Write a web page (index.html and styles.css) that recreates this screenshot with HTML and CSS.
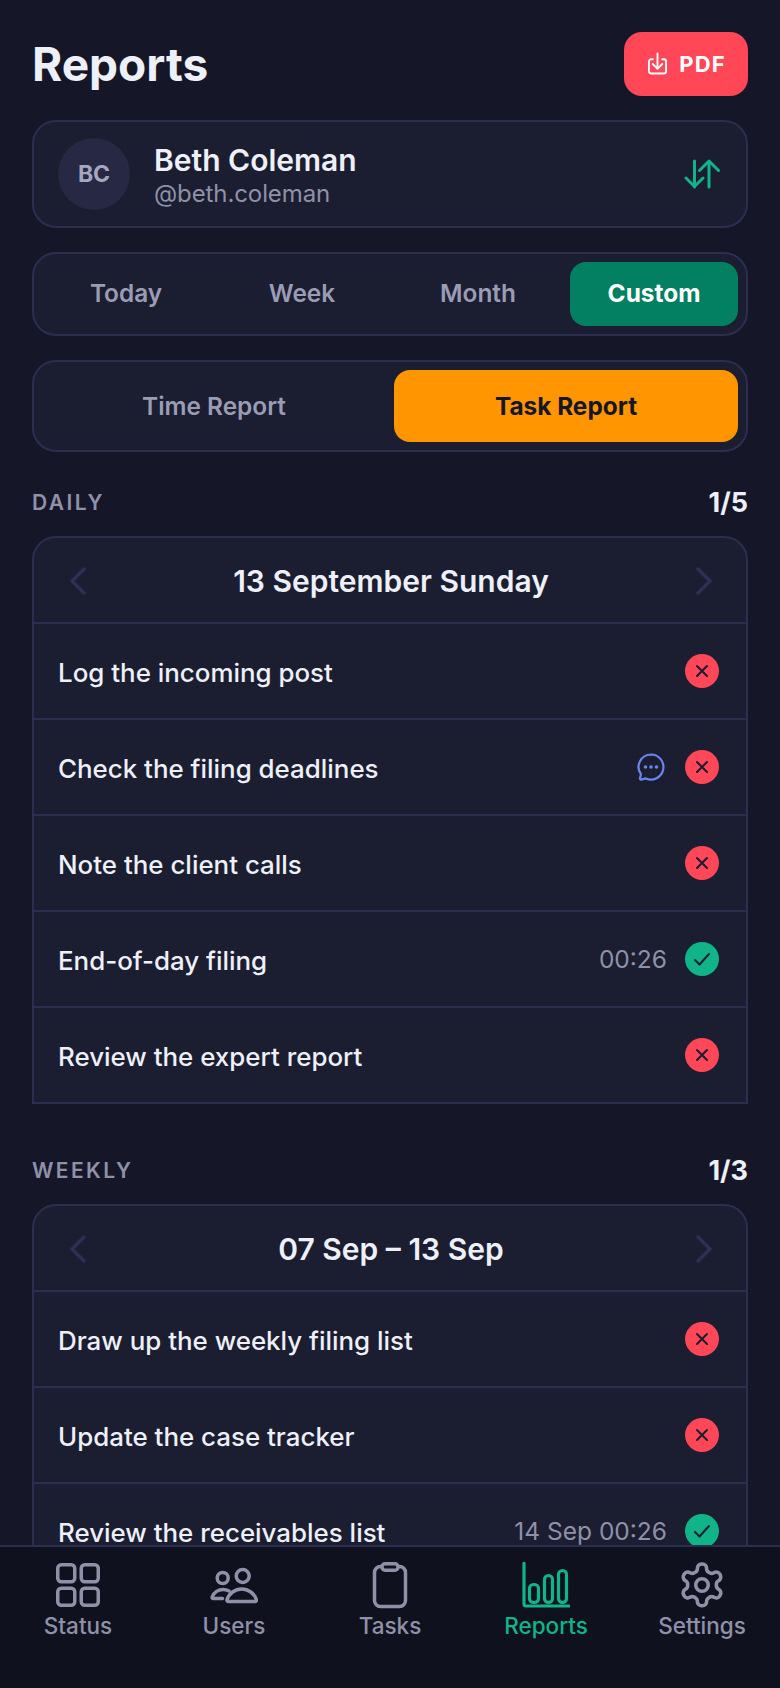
FILE: index.html
```html
<!DOCTYPE html>
<html lang="en">
<head>
  <meta charset="UTF-8">
  <title>Reports</title>
  <link rel="stylesheet" href="styles.css">
</head>
<body>

<main class="content">
  <header class="top">
    <h1>Reports</h1>
    <button class="pdf-btn">
      <svg width="19" height="24" viewBox="0 0 20 24" fill="none" stroke="#fff" stroke-width="2" stroke-linecap="round" stroke-linejoin="round">
        <path d="M5 7H3.500A2.500 2.500 0 0 0 1 9.500v10A2.500 2.500 0 0 0 3.500 22h13a2.500 2.500 0 0 0 2.500-2.500v-10A2.500 2.500 0 0 0 16.500 7H15"/>
        <path d="M10 1v16M5 12l5 5 5-5"/>
      </svg>
      PDF
    </button>
  </header>

  <section class="user-card">
    <div class="avatar">BC</div>
    <div class="user-info">
      <div class="user-name">Beth Coleman</div>
      <div class="user-handle">@beth.coleman</div>
    </div>
    <svg class="swap" width="36" height="30" viewBox="0 0 36 30" fill="none" stroke="#10b488" stroke-width="3" stroke-linecap="round" stroke-linejoin="round">
      <path d="M10.500 2v26M2 19l8.500 8.500L19 19"/>
      <path d="M25 28V2M15.500 11.500 25 2l9.500 9.500"/>
    </svg>
  </section>

  <nav class="segments periods">
    <button>Today</button>
    <button>Week</button>
    <button>Month</button>
    <button class="on-green">Custom</button>
  </nav>

  <nav class="segments kinds">
    <button>Time Report</button>
    <button class="on-orange">Task Report</button>
  </nav>

  <div class="section-head first">
    <span class="section-title">DAILY</span>
    <span class="section-count">1/5</span>
  </div>
  <section class="report-card">
    <div class="card-head">
      <svg class="chev" width="18" height="28" viewBox="0 0 18 28"><path d="M15 2 3 14l12 12"/></svg>
      <span>13 September Sunday</span>
      <svg class="chev" width="18" height="28" viewBox="0 0 18 28"><path d="m3 2 12 12L3 26"/></svg>
    </div>
    <div class="row">
      <span class="row-name">Log the incoming post</span>
      <span class="status fail"><svg width="14" height="14" viewBox="0 0 14 14"><path d="m2 2 10 10M12 2 2 12"/></svg></span>
    </div>
    <div class="row">
      <span class="row-name">Check the filing deadlines</span>
      <svg class="chat" width="28" height="28" viewBox="0 0 28 28" fill="none">
        <path d="M14 1.500a12.500 12.500 0 1 1-5.200 23.900l-4.600 1.200a1 1 0 0 1-1.200-1.200l.9-4.200A12.500 12.500 0 0 1 14 1.500z" stroke="#6a86ee" stroke-width="2.200" stroke-linejoin="round"/>
        <circle cx="8.500" cy="14" r="1.800" fill="#6a86ee"/>
        <circle cx="14" cy="14" r="1.800" fill="#6a86ee"/>
        <circle cx="19.500" cy="14" r="1.800" fill="#6a86ee"/>
      </svg>
      <span class="status fail"><svg width="14" height="14" viewBox="0 0 14 14"><path d="m2 2 10 10M12 2 2 12"/></svg></span>
    </div>
    <div class="row">
      <span class="row-name">Note the client calls</span>
      <span class="status fail"><svg width="14" height="14" viewBox="0 0 14 14"><path d="m2 2 10 10M12 2 2 12"/></svg></span>
    </div>
    <div class="row">
      <span class="row-name">End-of-day filing</span>
      <span class="row-time">00:26</span>
      <span class="status ok"><svg width="18" height="14" viewBox="0 0 18 14"><path d="m2 8 4.500 4.500L16 2"/></svg></span>
    </div>
    <div class="row">
      <span class="row-name">Review the expert report</span>
      <span class="status fail"><svg width="14" height="14" viewBox="0 0 14 14"><path d="m2 2 10 10M12 2 2 12"/></svg></span>
    </div>
  </section>

  <div class="section-head">
    <span class="section-title">WEEKLY</span>
    <span class="section-count">1/3</span>
  </div>
  <section class="report-card">
    <div class="card-head">
      <svg class="chev" width="18" height="28" viewBox="0 0 18 28"><path d="M15 2 3 14l12 12"/></svg>
      <span>07 Sep – 13 Sep</span>
      <svg class="chev" width="18" height="28" viewBox="0 0 18 28"><path d="m3 2 12 12L3 26"/></svg>
    </div>
    <div class="row">
      <span class="row-name">Draw up the weekly filing list</span>
      <span class="status fail"><svg width="14" height="14" viewBox="0 0 14 14"><path d="m2 2 10 10M12 2 2 12"/></svg></span>
    </div>
    <div class="row">
      <span class="row-name">Update the case tracker</span>
      <span class="status fail"><svg width="14" height="14" viewBox="0 0 14 14"><path d="m2 2 10 10M12 2 2 12"/></svg></span>
    </div>
    <div class="row">
      <span class="row-name">Review the receivables list</span>
      <span class="row-time">14 Sep 00:26</span>
      <span class="status ok"><svg width="18" height="14" viewBox="0 0 18 14"><path d="m2 8 4.500 4.500L16 2"/></svg></span>
    </div>
  </section>
</main>

<footer class="tabbar">
  <div class="tab">
    <svg width="48" height="48" viewBox="0 0 48 48" fill="none" stroke="currentColor" stroke-width="3.500">
      <rect x="3.750" y="2.750" width="17" height="17" rx="3.500"/>
      <rect x="27.250" y="2.750" width="17" height="17" rx="3.500"/>
      <rect x="3.750" y="26.250" width="17" height="17" rx="3.500"/>
      <rect x="27.250" y="26.250" width="17" height="17" rx="3.500"/>
    </svg>
    <span>Status</span>
  </div>
  <div class="tab">
    <svg width="48" height="48" viewBox="0 0 48 48" fill="none" stroke="currentColor" stroke-width="3.500" stroke-linecap="round" stroke-linejoin="round">
      <circle cx="12.700" cy="16" r="5.500"/>
      <circle cx="32.700" cy="14" r="6.500"/>
      <path d="M12.500 36.500h-9c-1.200 0-1.700-.8-1.200-1.800C4 30.500 8.500 27.500 13 27.500c2 0 4 .5 6 1.500"/>
      <path d="M18.500 39.500c-1.200 0-1.800-.8-1.500-1.800C19 31.500 25 27 31.700 27s12.700 4.500 14.700 10.700c.3 1-.3 1.800-1.500 1.800z"/>
    </svg>
    <span>Users</span>
  </div>
  <div class="tab">
    <svg width="48" height="48" viewBox="0 0 48 48" fill="none" stroke="currentColor" stroke-width="3.500" stroke-linejoin="round">
      <path d="M16 4.500h-1.500a6 6 0 0 0-6 6v28a6 6 0 0 0 6 6h19a6 6 0 0 0 6-6v-28a6 6 0 0 0-6-6H32"/>
      <rect x="16" y="1.750" width="16" height="6.500" rx="3"/>
    </svg>
    <span>Tasks</span>
  </div>
  <div class="tab active">
    <svg width="48" height="48" viewBox="0 0 48 48" fill="none" stroke="currentColor" stroke-width="3.200" stroke-linecap="round" stroke-linejoin="round">
      <path d="M2 1.500V42a2 2 0 0 0 2 2h43"/>
      <rect x="7.500" y="22.500" width="9" height="18" rx="4"/>
      <rect x="22.500" y="13.500" width="8" height="27" rx="4"/>
      <rect x="36.500" y="8.500" width="8" height="32" rx="4"/>
    </svg>
    <span>Reports</span>
  </div>
  <div class="tab">
    <svg width="48" height="48" viewBox="0.500 1 23 23" fill="none" stroke="currentColor" stroke-width="1.700" stroke-linecap="round" stroke-linejoin="round">
      <path d="M12.220 2h-.44a2 2 0 0 0-2 2v.18a2 2 0 0 1-1 1.730l-.43.250a2 2 0 0 1-2 0l-.15-.08a2 2 0 0 0-2.730.73l-.22.38a2 2 0 0 0 .73 2.730l.15.100a2 2 0 0 1 1 1.720v.51a2 2 0 0 1-1 1.740l-.15.090a2 2 0 0 0-.73 2.730l.22.38a2 2 0 0 0 2.730.73l.15-.08a2 2 0 0 1 2 0l.43.250a2 2 0 0 1 1 1.730V20a2 2 0 0 0 2 2h.44a2 2 0 0 0 2-2v-.18a2 2 0 0 1 1-1.730l.43-.25a2 2 0 0 1 2 0l.15.080a2 2 0 0 0 2.730-.73l.22-.39a2 2 0 0 0-.73-2.730l-.15-.08a2 2 0 0 1-1-1.740v-.5a2 2 0 0 1 1-1.740l.15-.09a2 2 0 0 0 .73-2.730l-.22-.38a2 2 0 0 0-2.730-.73l-.15.080a2 2 0 0 1-2 0l-.43-.25a2 2 0 0 1-1-1.730V4a2 2 0 0 0-2-2z"/>
      <circle cx="12" cy="12" r="3"/>
    </svg>
    <span>Settings</span>
  </div>
</footer>

</body>
</html>
```

FILE: styles.css
```css
* {
  box-sizing: border-box;
}

html, body {
  height: 100%;
}

body {
  margin: 0;
  display: flex;
  flex-direction: column;
  overflow: hidden;
  font-family: Inter, "Noto Sans", sans-serif;
  background-color: #151728;
  color: #eef0f8;
}

button {
  font-family: inherit;
  border: none;
  cursor: pointer;
}

.content {
  flex: 1;
  min-height: 0;
  overflow: hidden;
  padding: 32px 32px 0;
}

.top {
  display: flex;
  justify-content: space-between;
  align-items: center;
  height: 64px;
  margin-bottom: 24px;
}

h1 {
  margin: 0;
  font-size: 46px;
  font-weight: 700;
  color: #eef0f8;
}

.pdf-btn {
  width: 124px;
  height: 64px;
  display: flex;
  align-items: center;
  justify-content: center;
  gap: 12px;
  padding: 0 0 0 2px;
  background-color: #ff4757;
  color: white;
  border-radius: 18px;
  font-size: 22px;
  font-weight: 700;
  letter-spacing: 1.200px;
}

.user-card {
  height: 108px;
  display: flex;
  align-items: center;
  gap: 24px;
  padding: 0 26px 0 24px;
  background-color: #1b1d30;
  border: 2px solid #2c2e50;
  border-radius: 24px;
  margin-bottom: 24px;
}

.avatar {
  width: 72px;
  height: 72px;
  flex-shrink: 0;
  display: flex;
  align-items: center;
  justify-content: center;
  border-radius: 50%;
  background-color: #262844;
  color: #a5a7c0;
  font-size: 23px;
  font-weight: 700;
}

.user-info {
  flex: 1;
  margin-top: 2px;
}

.user-name {
  font-size: 30px;
  font-weight: 600;
  line-height: 36px;
}

.user-handle {
  margin-top: 1px;
  font-size: 24px;
  line-height: 30px;
  letter-spacing: -0.100px;
  color: #8f91a8;
}

.segments {
  display: flex;
  gap: 8px;
  padding: 8px;
  background-color: #1b1d30;
  border: 2px solid #2c2e50;
  border-radius: 24px;
  margin-bottom: 24px;
}

.segments button {
  flex: 1;
  padding: 0 0 1px;
  background: none;
  color: #9a9cb4;
  font-size: 24.400px;
  font-weight: 600;
  border-radius: 16px;
}

.periods button {
  height: 64px;
  padding-bottom: 2px;
}

.kinds button {
  height: 72px;
}

.segments .on-green {
  background-color: #028061;
  color: white;
  font-weight: 700;
}

.segments .on-orange {
  background-color: #ff9500;
  color: #151728;
  font-weight: 700;
}

.section-head {
  display: flex;
  justify-content: space-between;
  align-items: center;
  height: 30px;
  margin-top: 51px;
  margin-bottom: 19px;
}

.section-head.first {
  margin-top: 35px;
}

.section-title {
  font-size: 21px;
  font-weight: 600;
  letter-spacing: 2.400px;
  color: #8f91a8;
}

.section-count {
  font-size: 27px;
  font-weight: 700;
}

.report-card {
  background-color: #1b1d30;
  border: 2px solid #2c2e50;
  border-radius: 24px 24px 0 0;
}

.card-head {
  height: 84px;
  display: flex;
  align-items: center;
  justify-content: space-between;
  padding: 1px 33px 0 35px;
  font-size: 30px;
  font-weight: 600;
}

.chev {
  fill: none;
  stroke: #2d3054;
  stroke-width: 3.500;
  stroke-linecap: round;
  stroke-linejoin: round;
}

.row {
  height: 96px;
  display: flex;
  align-items: center;
  gap: 20px;
  padding: 0 27px 0 24px;
  border-top: 2px solid #2c2e50;
  font-size: 25.900px;
  font-weight: 500;
}

.row-name {
  flex: 1;
  padding-top: 2px;
}

.row-time {
  margin-right: -2px;
  font-weight: 400;
  font-size: 24.500px;
  color: #8f91a8;
}

.status {
  width: 34px;
  height: 34px;
  flex-shrink: 0;
  display: flex;
  align-items: center;
  justify-content: center;
  border-radius: 50%;
  margin-top: -1px;
}

.chat {
  margin-top: -1px;
}

.status svg {
  fill: none;
  stroke: #1b1d30;
  stroke-width: 2;
  stroke-linecap: round;
  stroke-linejoin: round;
}

.fail {
  background-color: #ff4757;
}

.ok {
  background-color: #10b488;
}

.tabbar {
  height: 143px;
  flex-shrink: 0;
  display: grid;
  grid-template-columns: repeat(5, 1fr);
  background-color: #10111f;
  border-top: 2px solid #2c2e50;
}

.tab {
  display: flex;
  flex-direction: column;
  align-items: center;
  padding-top: 15px;
  color: #8f91a8;
}

.tab span {
  margin-top: 2px;
  font-size: 22.500px;
  font-weight: 500;
  line-height: 28px;
}

.tab.active {
  color: #10b488;
}
```
